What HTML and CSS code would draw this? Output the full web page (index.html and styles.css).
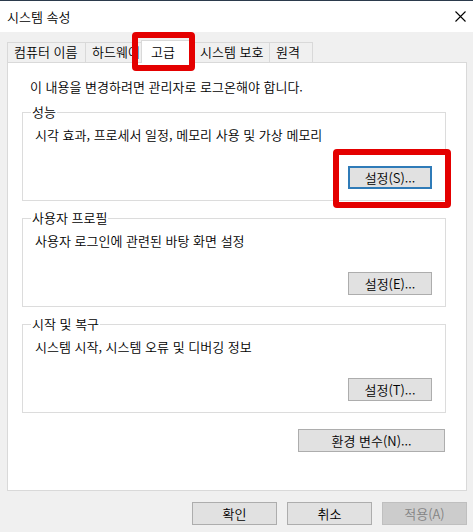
FILE: index.html
```html
<!DOCTYPE html>
<html lang="ko">
<head>
<meta charset="utf-8">
<title>시스템 속성</title>
<link rel="stylesheet" href="styles.css">
</head>
<body>
<div class="window">
  <div class="titlebar">
    <span class="title">시스템 속성</span>
    <svg class="close" width="11" height="11" viewBox="0 0 11 11"><path d="M0.5 0.5 L10.5 10.5 M10.5 0.5 L0.5 10.5" stroke="#000" stroke-width="1.1" fill="none"/></svg>
  </div>
  <div class="body">
    <div class="tabs">
      <div class="tab t1">컴퓨터 이름</div>
      <div class="tab t2">하드웨어</div>
      <div class="tab t3 selected">고급</div>
      <div class="tab t4">시스템 보호</div>
      <div class="tab t5">원격</div>
      <div class="mark mark-tab"></div>
    </div>
    <div class="panel">
      <p class="intro">이 내용을 변경하려면 관리자로 로그온해야 합니다.</p>
      <fieldset class="group g1">
        <legend>성능</legend>
        <p class="desc">시각 효과, 프로세서 일정, 메모리 사용 및 가상 메모리</p>
        <div class="btnrow">
          <div class="btn-wrap">
            <button class="btn focused">설정(S)...</button>
            <div class="mark mark-btn"></div>
          </div>
        </div>
      </fieldset>
      <fieldset class="group g2">
        <legend>사용자 프로필</legend>
        <p class="desc">사용자 로그인에 관련된 바탕 화면 설정</p>
        <div class="btnrow"><button class="btn">설정(E)...</button></div>
      </fieldset>
      <fieldset class="group g3">
        <legend>시작 및 복구</legend>
        <p class="desc">시스템 시작, 시스템 오류 및 디버깅 정보</p>
        <div class="btnrow"><button class="btn">설정(T)...</button></div>
      </fieldset>
      <div class="envrow"><button class="btn env">환경 변수(N)...</button></div>
    </div>
    <div class="footer">
      <button class="btn fbtn">확인</button>
      <button class="btn fbtn">취소</button>
      <button class="btn fbtn disabled">적용(A)</button>
    </div>
  </div>
</div>
</body>
</html>
```
FILE: styles.css
```css
* { box-sizing: border-box; }
html, body { margin: 0; padding: 0; }
body {
  width: 473px;
  height: 532px;
  overflow: hidden;
  background: #f0f0f0;
  font-family: "Noto Sans CJK KR", "Noto Sans", sans-serif;
  font-size: 13px;
  font-weight: 350;
  line-height: 16px;
  color: #000;
}
.window { height: 532px; display: flex; flex-direction: column; }
.titlebar {
  height: 32px;
  background: #fff;
  border-top: 1px solid #2b3a4c;
  display: flex;
  align-items: center;
  justify-content: space-between;
  padding: 0 7px 0 7px;
}
.title { font-size: 13px; }
.close { display: block; margin-right: 0; }
.body { padding: 10px 6px 0 7px; flex: 1; }
.tabs {
  position: relative;
  display: flex;
  height: 20px;
}
.tab {
  height: 20px;
  border: 1px solid #d9d9d9;
  border-bottom: none;
  border-right: none;
  background: #f0f0f0;
  padding: 1px 0 0 6px;
  white-space: nowrap;
  overflow: hidden;
}
.t1 { width: 78px; }
.t2 { width: 56px; }
.t3 { width: 52px; padding-left: 9px; }
.t4 { width: 76px; }
.t5 { width: 44px; border-right: 1px solid #d9d9d9; }
.tab.selected {
  background: #fff;
  height: 23px;
  margin-top: -2px;
  position: relative;
  z-index: 1;
  padding-top: 3px;
}
.mark {
  position: absolute;
  border: 6px solid #e40000;
  border-radius: 4px;
  z-index: 5;
  pointer-events: none;
}
.mark-tab { left: 125px; top: -10px; width: 63px; height: 39px; }
.panel {
  height: 429px;
  border: 1px solid #d9d9d9;
  background: #fff;
  padding: 16px 20px 0 14px;
}
.intro { margin: 0 0 9px 8px; }
.group {
  margin: 0 0 9px 0;
  border: 1px solid #dcdcdc;
  padding: 7px 13px 11px 7px;
  min-width: 0;
}
.group legend {
  padding: 0 1px;
  margin-left: 1px;
  line-height: 16px;
}
.desc { margin: 0 0 23px 5px; }
.btnrow { display: flex; justify-content: flex-end; }
.btn-wrap { position: relative; }
.btn {
  font-family: inherit;
  font-size: 13px;
  font-weight: 350;
  line-height: 16px;
  color: #000;
  background: #e1e1e1;
  border: 1px solid #adadad;
  width: 84px;
  height: 23px;
  padding: 0;
  margin: 0;
  display: block;
}
.btn.focused { border: 2px solid #2f7bb8; }
.mark-btn { left: -15px; top: -17px; width: 118px; height: 59px; }
.envrow { display: flex; justify-content: flex-end; margin-top: 16px; padding-right: 1px; }
.btn.env { width: 147px; }
.footer {
  display: flex;
  justify-content: flex-end;
  gap: 10px;
  margin-top: 11px;
}
.btn.fbtn { width: 85px; }
.btn.disabled { background: #cccccc; border-color: #bfbfbf; color: #838383; }
```
